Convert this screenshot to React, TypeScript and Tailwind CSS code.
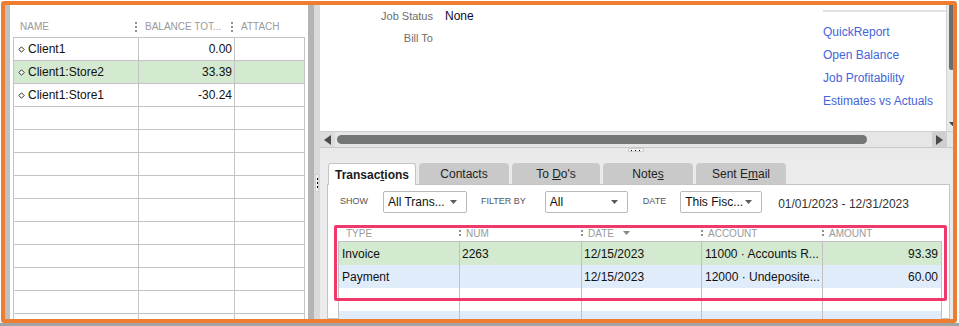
import React from "react";

const leftRows = [
  { name: "Client1", balance: "0.00", selected: false },
  { name: "Client1:Store2", balance: "33.39", selected: true },
  { name: "Client1:Store1", balance: "-30.24", selected: false },
];

const txRows = [
  { type: "Invoice", num: "2263", date: "12/15/2023", account: "11000 · Accounts R...", amount: "93.39", bg: "bg-[#d3e9d0]" },
  { type: "Payment", num: "", date: "12/15/2023", account: "12000 · Undeposite...", amount: "60.00", bg: "bg-[#e1ecfb]" },
  { type: "", num: "", date: "", account: "", amount: "", bg: "bg-white" },
  { type: "", num: "", date: "", account: "", amount: "", bg: "bg-[#e1ecfb]" },
];

const links = ["QuickReport", "Open Balance", "Job Profitability", "Estimates vs Actuals"];

function Caret({ dir, color = "#555" }: { dir: "down" | "left" | "right"; color?: string }) {
  if (dir === "down")
    return (
      <svg width="7" height="4" viewBox="0 0 7 4">
        <path d="M0 0H7L3.5 4Z" fill={color} />
      </svg>
    );
  if (dir === "left")
    return (
      <svg width="7" height="10" viewBox="0 0 7 10">
        <path d="M7 0V10L0 5Z" fill={color} />
      </svg>
    );
  return (
    <svg width="7" height="10" viewBox="0 0 7 10">
      <path d="M0 0V10L7 5Z" fill={color} />
    </svg>
  );
}

function Grip({ dots = 3 }: { dots?: number }) {
  return (
    <svg width="2" height={dots === 3 ? 10 : 6} viewBox={`0 0 2 ${dots === 3 ? 10 : 6}`}>
      <rect x="0" y="0" width="2" height="2" fill="#8f8f8f" />
      <rect x="0" y="4" width="2" height="2" fill="#8f8f8f" />
      {dots === 3 && <rect x="0" y="8" width="2" height="2" fill="#8f8f8f" />}
    </svg>
  );
}

function Bullet() {
  return (
    <svg width="7" height="7" viewBox="0 0 7 7">
      <path d="M3.5 0.8L6.2 3.5L3.5 6.2L0.8 3.5Z" fill="#fff" stroke="#333" strokeWidth="1" />
    </svg>
  );
}

function Dropdown({ label, width }: { label: string; width: string }) {
  return (
    <div className={`${width} h-[22px] flex items-center justify-between pl-[4px] pr-[9px] bg-white border border-[#b9b9b9] rounded-[2px] text-[12px] text-[#111]`}>
      <span>{label}</span>
      <Caret dir="down" color="#5a5a5a" />
    </div>
  );
}

function LeftPane() {
  return (
    <div className="w-[298px] shrink-0 bg-white flex flex-col">
      <div className="h-[32px] shrink-0 flex items-end pb-[4px] pl-[3px] text-[10px] leading-[12px] text-[#9a9a9a]">
        <div className="w-[125px] flex items-center justify-between pl-[7px] pr-[1px]">
          <span>NAME</span>
          <Grip />
        </div>
        <div className="w-[96px] flex items-center justify-between pl-[7px] pr-[1px]">
          <span>BALANCE TOT...</span>
          <Grip />
        </div>
        <div className="pl-[7px]">ATTACH</div>
      </div>
      <div className="ml-[3px] w-[292px] border-l border-r border-t border-[#c4c4c4] flex-1 min-h-0 overflow-hidden">
        {Array.from({ length: 13 }).map((_, i) => {
          const row = leftRows[i];
          return (
            <div
              key={i}
              className={`h-[23px] flex border-b border-[#c4c4c4] text-[12px] text-[#111] ${row?.selected ? "bg-[#d3e9d0]" : "bg-white"}`}
            >
              <div className="w-[125px] border-r border-[#c4c4c4] flex items-center pl-[4px] gap-[3px]">
                {row && (
                  <>
                    <Bullet />
                    <span>{row.name}</span>
                  </>
                )}
              </div>
              <div className="w-[96px] border-r border-[#c4c4c4] flex items-center justify-end pr-[2px]">
                {row?.balance}
              </div>
              <div className="flex-1" />
            </div>
          );
        })}
      </div>
    </div>
  );
}

function Splitter() {
  return (
    <div className="w-[12px] shrink-0 flex">
      <div className="w-[6px] bg-[#b4b4b4]" />
      <div className="w-[6px] bg-[#dadada] flex flex-col">
        <div className="mt-[169px] ml-px w-[4px] h-[18px] bg-[#f5f5f5] border border-[#cfcfcf] flex flex-col items-center justify-center gap-[2px]">
          <span className="w-px h-[2px] bg-black" />
          <span className="w-px h-[2px] bg-black" />
          <span className="w-px h-[2px] bg-black" />
        </div>
      </div>
    </div>
  );
}

function Tab({ label, width, active }: { label: React.ReactNode; width: string; active?: boolean }) {
  if (active)
    return (
      <div className={`${width} h-[22px] -mb-px z-10 bg-white border-t border-l border-r border-[#c4c4c4] rounded-t-[3px] flex items-center justify-center font-bold text-[12px] text-[#1a1a1a]`}>
        {label}
      </div>
    );
  return (
    <div className={`${width} h-[21px] bg-[#c9c9c9] rounded-t-[4px] flex items-center justify-center text-[12px] text-[#222]`}>
      {label}
    </div>
  );
}

function RightPane() {
  return (
    <div className="flex-1 min-w-0 flex flex-col">
      {/* customer info */}
      <div className="h-[126px] shrink-0 flex bg-white">
        <div className="flex-1 flex">
          <div className="flex flex-col">
            <div className="h-[22px] flex items-center">
              <span className="w-[113px] text-right text-[11px] text-[#6e6e6e]">Job Status</span>
              <span className="ml-[12px] text-[12px] text-[#0d0d33]">None</span>
            </div>
            <div className="h-[22px] flex items-center">
              <span className="w-[113px] text-right text-[11px] text-[#6e6e6e]">Bill To</span>
            </div>
          </div>
          <div className="ml-auto w-[123px] pt-[5px]">
            <div className="h-[2px] bg-[#e3e3e3]" />
            <div className="pt-[9px] flex flex-col text-[12px] text-[#4365d8]">
              {links.map((l) => (
                <a key={l} className="h-[23px] leading-[23px] cursor-pointer">
                  {l}
                </a>
              ))}
            </div>
          </div>
        </div>
        <div className="w-[7px] bg-[#e9e9e9] border-l border-[#d4d4d4] flex flex-col justify-between">
          <div className="ml-[2px] w-[5px] h-[65px] bg-[#6d6d6d] rounded-b-[3px]" />
          <div className="ml-[2px] mb-[5px]">
            <Caret dir="down" color="#444" />
          </div>
        </div>
      </div>

      {/* horizontal scrollbar */}
      <div className="h-[16px] shrink-0 flex items-center bg-[#e6e6e6] border-t border-[#cfcfcf]">
        <div className="w-[15px] h-full bg-[#dcdcdc] flex items-center justify-center">
          <Caret dir="left" color="#4a4a4a" />
        </div>
        <div className="ml-[2px] w-[530px] h-[9px] rounded-full bg-[#737876]" />
        <div className="flex-1" />
        <div className="w-[15px] h-full bg-[#cfcfcf] flex items-center justify-center">
          <Caret dir="right" color="#4a4a4a" />
        </div>
        <div className="w-[6px]" />
      </div>

      {/* pane splitter */}
      <div className="h-[6px] shrink-0 bg-[#e9e9e9] border-t border-[#c9c9c9] flex justify-center">
        <div className="mr-[2px] w-[16px] h-[4px] bg-[#f7f7f7] border border-[#cfcfcf] flex items-center justify-center gap-[3px]">
          <span className="w-px h-px bg-black" />
          <span className="w-px h-px bg-black" />
          <span className="w-px h-px bg-black" />
        </div>
      </div>

      {/* tabs area */}
      <div className="flex-1 min-h-0 overflow-hidden bg-[#ebebeb] pl-[7px] pr-[3px] pt-[10px] flex flex-col">
        <div className="shrink-0 flex items-end gap-[3px] pl-px">
          <Tab
            active
            width="w-[88px]"
            label={
              <span>
                Transac<span className="underline">t</span>ions
              </span>
            }
          />
          <Tab width="w-[90px]" label="Contacts" />
          <Tab
            width="w-[88px]"
            label={
              <span>
                To <span className="underline">D</span>o's
              </span>
            }
          />
          <Tab
            width="w-[90px]"
            label={
              <span>
                Note<span className="underline">s</span>
              </span>
            }
          />
          <Tab
            width="w-[90px]"
            label={
              <span>
                Sent E<span className="underline">m</span>ail
              </span>
            }
          />
        </div>
        <div className="flex-1 min-h-0 bg-white border border-[#c4c4c4] flex flex-col">
          {/* filters */}
          <div className="shrink-0 pt-[6px] pl-[12px] flex items-center">
            <span className="text-[9px] text-[#555]">SHOW</span>
            <div className="ml-[15px]">
              <Dropdown label="All Trans..." width="w-[84px]" />
            </div>
            <span className="ml-[14px] text-[9px] text-[#555]">FILTER BY</span>
            <div className="ml-[19px]">
              <Dropdown label="All" width="w-[83px]" />
            </div>
            <span className="ml-[15px] text-[9px] text-[#555]">DATE</span>
            <div className="ml-[14px]">
              <Dropdown label="This Fisc..." width="w-[82px]" />
            </div>
            <span className="ml-[16px] pt-[4px] text-[12px] text-[#333]">01/01/2023 - 12/31/2023</span>
          </div>

          {/* transactions table */}
          <div className="shrink-0 mt-[12px] ml-[10px] w-[604px]">
            <div className="h-[16px] flex items-center text-[10px] text-[#9a9a9a]">
              <div className="w-[121px] pl-[8px]">TYPE</div>
              <div className="w-[122px] flex items-center">
                <Grip dots={2} />
                <span className="ml-[5px]">NUM</span>
              </div>
              <div className="w-[120px] flex items-center">
                <Grip dots={2} />
                <span className="ml-[5px]">DATE</span>
                <span className="ml-[9px] flex">
                  <Caret dir="down" color="#8a8a8a" />
                </span>
              </div>
              <div className="w-[121px] flex items-center">
                <Grip dots={2} />
                <span className="ml-[5px]">ACCOUNT</span>
              </div>
              <div className="flex-1 flex items-center">
                <Grip dots={2} />
                <span className="ml-[5px]">AMOUNT</span>
              </div>
            </div>
            <div className="border-t border-l border-r border-[#c0c0c0]">
              {txRows.map((r, i) => (
                <div key={i} className={`h-[23px] flex text-[12px] text-[#111] ${r.bg}`}>
                  <div className="w-[121px] border-r border-[#c0c0c0] flex items-center pl-[3px]">{r.type}</div>
                  <div className="w-[122px] border-r border-[#c0c0c0] flex items-center pl-[2px]">{r.num}</div>
                  <div className="w-[120px] border-r border-[#c0c0c0] flex items-center pl-[2px]">{r.date}</div>
                  <div className="w-[121px] border-r border-[#c0c0c0] flex items-center pl-[3px]">{r.account}</div>
                  <div className="flex-1 flex items-center justify-end pr-[3px]">{r.amount}</div>
                </div>
              ))}
            </div>
          </div>
        </div>
      </div>
    </div>
  );
}

export default function App() {
  return (
    <div className="relative w-[959px] h-[326px] overflow-hidden bg-white flex flex-col font-['Liberation_Sans',Arial,sans-serif]">
      <div className="h-px shrink-0" />
      <div className="flex shrink-0">
        <div className="w-px" />
        <div className="w-[956px] h-[322px] border-4 border-[#ed7d31] rounded-[3px] overflow-hidden flex">
          <div className="w-[5px] shrink-0 bg-[#c0c0c0]" />
          <LeftPane />
          <Splitter />
          <RightPane />
        </div>
      </div>
      <div className="flex-1 bg-[#a3a3a3]" />

      {/* highlight annotation */}
      <div className="absolute left-[334px] top-[225px] w-[613px] h-[76px] border-[3px] border-[#f0386b] rounded-[2px] pointer-events-none" />
    </div>
  );
}
